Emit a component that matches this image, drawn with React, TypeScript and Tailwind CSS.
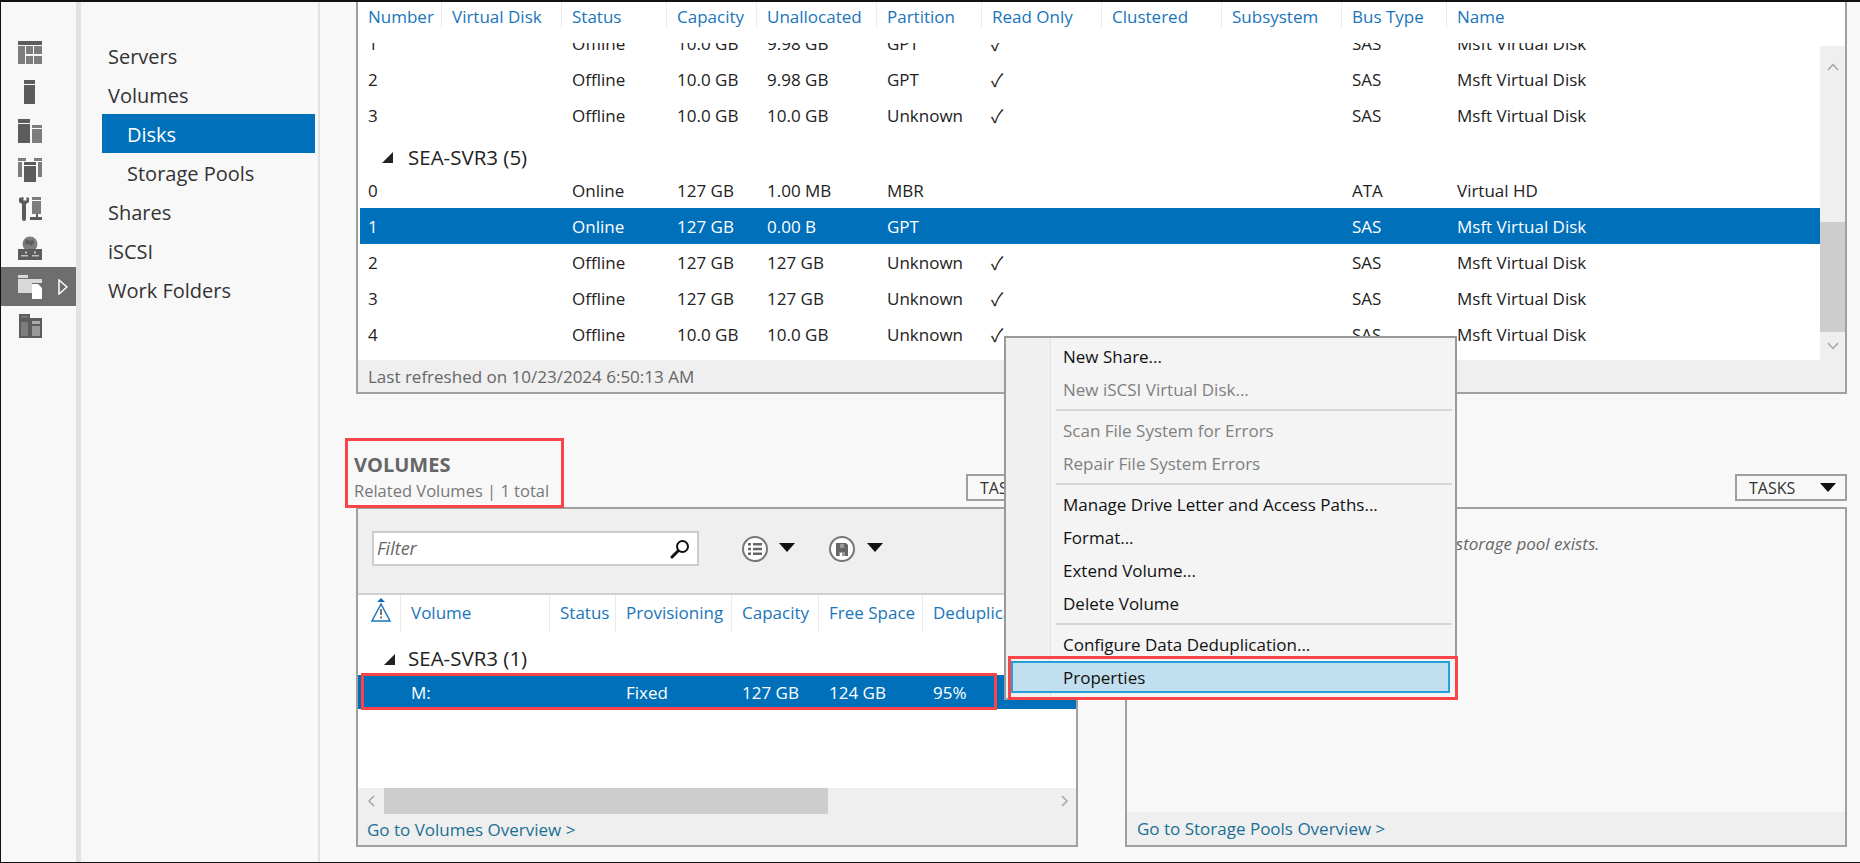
import React from "react";

const diskCols = "grid grid-cols-[81px_120px_105px_90px_120px_105px_120px_120px_120px_105px_210px]";
const volCols = "grid grid-cols-[42px_149px_66px_116px_87px_104px_150px]";

const diskHeaders = ["Number", "Virtual Disk", "Status", "Capacity", "Unallocated", "Partition", "Read Only", "Clustered", "Subsystem", "Bus Type", "Name"];
const volHeaders = ["Volume", "Status", "Provisioning", "Capacity", "Free Space", "Deduplication"];

const sarRows = [
    ["1", "Offline", "10.0 GB", "9.98 GB", "GPT", true, "SAS", "Msft Virtual Disk"],
    ["2", "Offline", "10.0 GB", "9.98 GB", "GPT", true, "SAS", "Msft Virtual Disk"],
    ["3", "Offline", "10.0 GB", "10.0 GB", "Unknown", true, "SAS", "Msft Virtual Disk"],
] as const;

const svr3Rows = [
    ["0", "Online", "127 GB", "1.00 MB", "MBR", false, "ATA", "Virtual HD"],
    ["1", "Online", "127 GB", "0.00 B", "GPT", false, "SAS", "Msft Virtual Disk"],
    ["2", "Offline", "127 GB", "127 GB", "Unknown", true, "SAS", "Msft Virtual Disk"],
    ["3", "Offline", "127 GB", "127 GB", "Unknown", true, "SAS", "Msft Virtual Disk"],
    ["4", "Offline", "10.0 GB", "10.0 GB", "Unknown", true, "SAS", "Msft Virtual Disk"],
] as const;

const navItems = ["Servers", "Volumes", "Disks", "Storage Pools", "Shares", "iSCSI", "Work Folders"];

function Caret({ className = "" }: { className?: string }) {
    return (
        <svg width="16" height="9" viewBox="0 0 16 9" className={className}>
            <path d="M0 0h16L8 9z" fill="#111" />
        </svg>
    );
}

function RailIcon({ index }: { index: number }) {
    const dark = "#5c5c5c";
    const mid = "#7d7d7d";
    return (
        <svg width="24" height="24" viewBox="0 0 24 24">
            {index === 0 && (
                <g>
                    <rect width="24" height="4" fill={dark} />
                    <rect y="5" width="7" height="18" fill={mid} />
                    <rect x="8" y="5" width="7" height="8" fill={mid} />
                    <rect x="16" y="5" width="8" height="8" fill={mid} />
                    <rect x="8" y="15" width="7" height="8" fill={mid} />
                    <rect x="16" y="15" width="8" height="8" fill={mid} />
                </g>
            )}
            {index === 1 && (
                <g>
                    <rect x="6" width="11" height="4" fill={dark} />
                    <rect x="6" y="5" width="11" height="19" fill={dark} />
                </g>
            )}
            {index === 2 && (
                <g>
                    <rect width="12" height="4" fill={dark} />
                    <rect y="5" width="12" height="19" fill={dark} />
                    <rect x="14" y="6" width="10" height="3" fill={mid} />
                    <rect x="14" y="10" width="10" height="14" fill={mid} />
                </g>
            )}
            {index === 3 && (
                <g>
                    <rect width="8" height="3" fill={mid} />
                    <rect y="4" width="4" height="15" fill={mid} />
                    <rect x="16" width="8" height="3" fill={mid} />
                    <rect x="20" y="4" width="4" height="15" fill={mid} />
                    <rect x="6" y="4" width="12" height="3" fill={dark} />
                    <rect x="6" y="8" width="12" height="16" fill={dark} />
                </g>
            )}
            {index === 4 && (
                <g>
                    <path d="M1 1v4l3 2v15a2 2 0 0 0 4 0V7l3-2V1L8.500 0v3.500h-3V0z" fill={dark} />
                    <rect x="14" width="9" height="3" fill={mid} />
                    <rect x="14" y="4" width="9" height="13" fill={mid} />
                    <rect x="18" y="17" width="2" height="4" fill={dark} />
                    <rect x="12" y="20" width="12" height="3" fill={dark} />
                </g>
            )}
            {index === 5 && (
                <g>
                    <circle cx="12" cy="8" r="7.500" fill={mid} />
                    <path d="M8 3l4 2 3-1 1 3-3 3-2-2-4 1z" fill={dark} />
                    <rect y="13" width="24" height="11" fill={dark} />
                    <rect x="3" y="19" width="7" height="1.500" fill="#bdbdbd" />
                    <rect x="14" y="19" width="7" height="1.500" fill="#bdbdbd" />
                    <rect x="7" y="15.500" width="2" height="2" fill="#bdbdbd" />
                    <rect x="16" y="15.500" width="2" height="2" fill="#bdbdbd" />
                </g>
            )}
            {index === 6 && (
                <g>
                    <path d="M0 0h10v3H0z" fill="#d9d9d9" />
                    <path d="M0 4h24v4H14v10H0z" fill="#d9d9d9" />
                    <path d="M14 9h6l4 4v11H14z" fill="#fff" />
                </g>
            )}
            {index === 7 && (
                <g>
                    <rect x="1" width="11" height="24" fill={dark} />
                    <rect x="3" y="2" width="7" height="1.500" fill={mid} />
                    <rect x="12" y="4" width="12" height="20" fill={dark} />
                    <rect x="14" y="7" width="8" height="3" fill="#aaa" />
                    <rect x="14" y="12" width="8" height="10" fill="#999" />
                    <rect x="3" y="8" width="7" height="14" fill={mid} />
                </g>
            )}
        </svg>
    );
}

function DiskRow({ row, selected }: { row: readonly (string | boolean)[]; selected?: boolean }) {
    const [num, status, cap, unalloc, part, ro, bus, name] = row;
    return (
        <div className={`${diskCols} h-[36px] items-center pt-[1px] ${selected ? "bg-[#0070bb] text-white" : "text-[#222]"}`}>
            <div className="pl-[8px]">{num}</div>
            <div />
            <div className="pl-[11px]">{status}</div>
            <div className="pl-[11px]">{cap}</div>
            <div className="pl-[11px]">{unalloc}</div>
            <div className="pl-[11px]">{part}</div>
            <div className="pl-[10px] font-['Noto_Sans_CJK_JP',sans-serif] text-[18px]">{ro ? "✓" : ""}</div>
            <div />
            <div />
            <div className="pl-[11px]">{bus}</div>
            <div className="pl-[11px]">{name}</div>
        </div>
    );
}

function GroupTriangle() {
    return (
        <svg width="11" height="11" viewBox="0 0 11 11">
            <path d="M11 0v11H0z" fill="#222" />
        </svg>
    );
}

function TasksButton({ className = "" }: { className?: string }) {
    return (
        <div className={`flex h-[27px] w-[112px] items-center justify-between border-2 border-[#a0a0a0] pl-[12px] pr-[9px] text-[16px] text-[#333] ${className}`}>
            <span>TASKS</span>
            <Caret />
        </div>
    );
}

function MenuItem({ label, disabled }: { label: string; disabled?: boolean }) {
    return (
        <div className={`flex h-[33px] items-center pl-[57px] text-[17px] ${disabled ? "text-[#808080]" : "text-[#111]"}`}>
            {label}
        </div>
    );
}

function MenuSep() {
    return <div className="my-[3px] ml-[50px] mr-[3px] h-[2px] bg-[#d7d7d7]" />;
}

export default function App() {
    return (
        <div className="relative flex h-[863px] w-[1860px] overflow-hidden border-t-2 border-b border-l border-[#111] bg-[#f8f8f8] font-['Open_Sans',sans-serif] text-[17px]">
            {/* Icon rail */}
            <div className="flex w-[75px] shrink-0 flex-col pt-[31px]">
                {[0, 1, 2, 3, 4, 5, 6, 7].map(i => (
                    <div key={i} className={`relative flex h-[39px] items-center pl-[17px] ${i === 6 ? "bg-[#6e6e6e]" : ""}`}>
                        <RailIcon index={i} />
                        {i === 6 && (
                            <svg width="10" height="16" viewBox="0 0 10 16" className="ml-[16px]">
                                <path d="M1 1l8 7-8 7z" fill="none" stroke="#fff" strokeWidth="1.500" />
                            </svg>
                        )}
                    </div>
                ))}
            </div>
            <div className="w-[5px] shrink-0 bg-[#e2e2e2]" />

            {/* Nav */}
            <div className="flex w-[237px] shrink-0 flex-col pl-[21px] pr-[3px] pt-[34px] text-[20px] text-[#333]">
                {navItems.map(item => {
                    const sub = item === "Disks" || item === "Storage Pools";
                    return (
                        <div
                            key={item}
                            className={`flex h-[39px] items-center pt-[2px] ${sub ? "pl-[25px]" : "pl-[6px]"} ${item === "Disks" ? "bg-[#0070bb] text-white" : ""}`}
                        >
                            {item}
                        </div>
                    );
                })}
            </div>
            <div className="w-[2px] shrink-0 bg-[#e2e2e2]" />

            {/* Main */}
            <div className="flex min-w-0 flex-1 flex-col pl-[36px] pr-[13px]">
                {/* Disks table */}
                <div className="flex h-[392px] shrink-0 flex-col border-x-2 border-b-2 border-[#a0a0a0] bg-white">
                    <div className={`${diskCols} h-[41px] shrink-0 pl-[2px] text-[#1a75bb]`}>
                        {diskHeaders.map((h, i) => (
                            <div key={h} className={`h-[26px] pt-[2px] ${i === 0 ? "pl-[8px]" : "border-l border-[#ececec] pl-[10px]"}`}>{h}</div>
                        ))}
                    </div>
                    <div className="flex min-h-0 flex-1">
                        <div className="min-w-0 flex-1 overflow-hidden pl-[2px]">
                            <div className="-mt-[18px]">
                                {sarRows.map((r, i) => <DiskRow key={i} row={r} />)}
                                <div className="flex h-[39px] items-center pl-[22px] pt-[9px] text-[#222]">
                                    <GroupTriangle />
                                    <span className="ml-[15px] text-[20.500px]">SEA-SVR3 (5)</span>
                                </div>
                                {svr3Rows.map((r, i) => <DiskRow key={i} row={r} selected={i === 1} />)}
                            </div>
                        </div>
                        <div className="mt-[3px] flex w-[25px] shrink-0 flex-col items-center bg-[#efefef]">
                            <svg width="12" height="8" viewBox="0 0 12 8" className="mt-[17px]">
                                <path d="M1 7l5-5.500L11 7" fill="none" stroke="#a6a6a6" strokeWidth="1.500" />
                            </svg>
                            <div className="mt-[151px] h-[110px] w-full bg-[#cdcdcd]" />
                            <svg width="12" height="8" viewBox="0 0 12 8" className="mt-[10px]">
                                <path d="M1 1l5 5.500L11 1" fill="none" stroke="#a6a6a6" strokeWidth="1.500" />
                            </svg>
                        </div>
                    </div>
                    <div className="flex h-[32px] shrink-0 items-center bg-[#efefef] pl-[10px] pt-[1px] text-[#666]">
                        Last refreshed on 10/23/2024 6:50:13 AM
                    </div>
                </div>

                {/* Volumes and storage pools */}
                <div className="grid flex-1 grid-cols-[722px_722px] gap-x-[47px]">
                    <div className="flex flex-col">
                        <div className="flex h-[113px] items-end justify-between">
                            <div className="relative z-10 -mb-[1px] -ml-[11px] flex h-[70px] w-[219px] flex-col border-[3px] border-[#f9454a] pl-[6px] pt-[10px]">
                                <div className="text-[20px] font-bold leading-[27px] text-[#666]">VOLUMES</div>
                                <div className="text-[16.500px] leading-[26px] text-[#777]">Related Volumes | 1 total</div>
                            </div>
                            <TasksButton className="mb-[6px]" />
                        </div>
                        <div className="relative flex h-[340px] flex-col border-2 border-[#a0a0a0] bg-white">
                            <div className="flex h-[86px] shrink-0 items-start border-b-2 border-[#d0d0d0] bg-[#efefef] pl-[14px] pt-[22px]">
                                <div className="flex h-[35px] w-[327px] items-center justify-between border-2 border-[#ccc] bg-white pl-[3px] pr-[7px] text-[18px] italic text-[#666]">
                                    <span>Filter</span>
                                    <svg width="20" height="20" viewBox="0 0 20 20">
                                        <circle cx="12.500" cy="7.500" r="5.500" fill="none" stroke="#111" strokeWidth="2" />
                                        <path d="M8 12l-6 6" stroke="#111" strokeWidth="3" strokeLinecap="round" />
                                    </svg>
                                </div>
                                <div className="ml-[43px] mt-[5px] flex items-center">
                                    <div className="flex h-[26px] w-[26px] items-center justify-center rounded-full border-2 border-[#777] bg-white">
                                        <svg width="14" height="12" viewBox="0 0 14 12">
                                            <path d="M0 0h3v2.500H0zM5 0h9v2.500H5zM0 4.700h3v2.500H0zM5 4.700h9v2.500H5zM0 9.400h3V12H0zM5 9.400h9V12H5z" fill="#666" />
                                        </svg>
                                    </div>
                                    <Caret className="ml-[11px] -mt-[3px]" />
                                    <div className="ml-[34px] flex h-[26px] w-[26px] items-center justify-center rounded-full border-2 border-[#777] bg-white">
                                        <svg width="12" height="13" viewBox="0 0 12 13">
                                            <path d="M0 0h10l2 2v11H0z" fill="#666" />
                                            <rect x="4" y="1" width="4" height="4" fill="#999" />
                                            <rect x="3" y="9" width="6" height="4" fill="#999" />
                                            <rect x="4" y="10" width="2" height="3" fill="#fff" />
                                        </svg>
                                    </div>
                                    <Caret className="ml-[12px] -mt-[3px]" />
                                </div>
                            </div>
                            <div className={`${volCols} h-[37px] shrink-0 overflow-hidden text-[#1a75bb]`}>
                                <div className="flex justify-center pl-[3px] pt-[2px]">
                                    <svg width="22" height="26" viewBox="0 0 22 26">
                                        <path d="M7 5l4-4 4 4z" fill="#0f6cbd" />
                                        <path d="M11 7L2 24h18z" fill="none" stroke="#1a75bb" strokeWidth="1.500" />
                                        <path d="M10.200 12h1.600v6h-1.600zM10.200 19.500h1.600v2h-1.600z" fill="#555" />
                                    </svg>
                                </div>
                                {volHeaders.map(h => (
                                    <div key={h} className="whitespace-nowrap border-l border-[#ececec] pl-[10px] pt-[5px]">{h}</div>
                                ))}
                            </div>
                            <div className="flex h-[43px] shrink-0 items-end pb-[1px] pl-[26px] text-[#222]">
                                <span className="mb-[9px]"><GroupTriangle /></span>
                                <span className="ml-[13px] text-[20.500px]">SEA-SVR3 (1)</span>
                            </div>
                            <div className={`${volCols} relative h-[34px] shrink-0 items-center bg-[#0070bb] pt-[1px] text-white`}>
                                <div className="absolute -top-[2px] bottom-[-1px] left-[3px] w-[636px] border-[3px] border-[#f9454a]" />
                                <div />
                                <div className="pl-[11px]">M:</div>
                                <div />
                                <div className="pl-[11px]">Fixed</div>
                                <div className="pl-[11px]">127 GB</div>
                                <div className="pl-[11px]">124 GB</div>
                                <div className="pl-[11px]">95%</div>
                            </div>
                            <div className="flex-1" />
                            <div className="flex h-[26px] shrink-0 items-center bg-[#efefef]">
                                <svg width="10" height="12" viewBox="0 0 10 12" className="ml-[9px]">
                                    <path d="M7 1L2 6l5 5" fill="none" stroke="#a6a6a6" strokeWidth="1.500" />
                                </svg>
                                <div className="ml-[7px] h-full w-[444px] bg-[#cdcdcd]" />
                                <svg width="10" height="12" viewBox="0 0 10 12" className="ml-auto mr-[7px]">
                                    <path d="M3 1l5 5-5 5" fill="none" stroke="#a6a6a6" strokeWidth="1.500" />
                                </svg>
                            </div>
                            <div className="flex h-[31px] shrink-0 items-center bg-[#efefef] pl-[9px] pt-[1px] text-[#1b6f94]">
                                Go to Volumes Overview &gt;
                            </div>
                        </div>
                    </div>

                    <div className="flex flex-col">
                        <div className="flex h-[113px] items-end justify-end">
                            <TasksButton className="mb-[6px]" />
                        </div>
                        <div className="flex h-[340px] flex-col border-2 border-[#a0a0a0] bg-[#f8f8f8]">
                            <div className="flex-1 pt-[22px] text-center italic text-[#666]">No related storage pool exists.</div>
                            <div className="flex h-[33px] shrink-0 items-center bg-[#efefef] pl-[10px] pt-[1px] text-[#1b6f94]">
                                Go to Storage Pools Overview &gt;
                            </div>
                        </div>
                    </div>
                </div>
            </div>

            {/* Context menu */}
            <div className="absolute left-[1003px] top-[334px] z-20 w-[453px] border-2 border-[#999] bg-[#f4f4f4] pb-[4px] pt-[2px]">
                <div className="absolute bottom-0 left-0 top-0 w-[45px] border-r border-[#e2e2e2] bg-[#f0f0f0]" />
                <div className="relative">
                    <MenuItem label="New Share..." />
                    <MenuItem label="New iSCSI Virtual Disk..." disabled />
                    <MenuSep />
                    <MenuItem label="Scan File System for Errors" disabled />
                    <MenuItem label="Repair File System Errors" disabled />
                    <MenuSep />
                    <MenuItem label="Manage Drive Letter and Access Paths..." />
                    <MenuItem label="Format..." />
                    <MenuItem label="Extend Volume..." />
                    <MenuItem label="Delete Volume" />
                    <MenuSep />
                    <MenuItem label="Configure Data Deduplication..." />
                    <div className="relative">
                        <div className="absolute inset-x-[5px] top-0 h-[32px] border-2 border-[#26a0da] bg-[#c1dfee]" />
                        <div className="absolute -bottom-[6px] -right-[3px] left-[2px] -top-[5px] border-[3px] border-[#f9454a]" />
                        <div className="relative"><MenuItem label="Properties" /></div>
                    </div>
                </div>
            </div>
        </div>
    );
}
